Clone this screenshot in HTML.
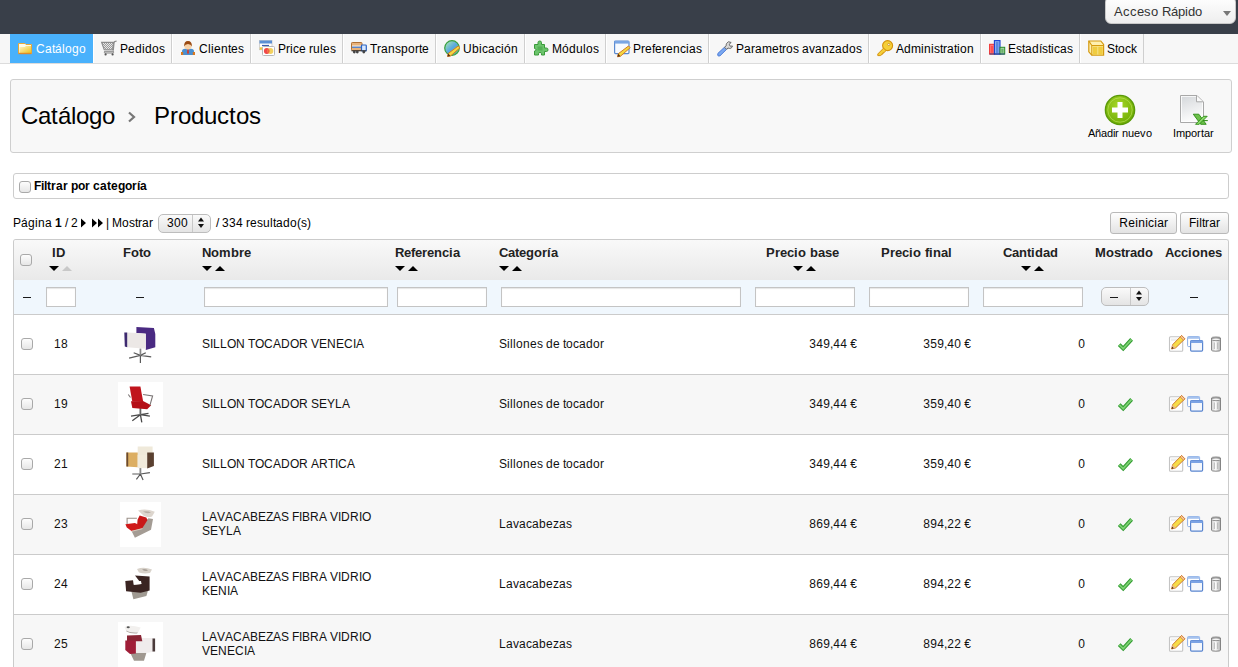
<!DOCTYPE html>
<html><head><meta charset="utf-8"><style>
*{box-sizing:border-box}
html,body{margin:0;padding:0;width:1238px;height:667px;overflow:hidden;background:#fff;font-family:"Liberation Sans",sans-serif;color:#000}
.a{position:absolute}
i{font-style:normal;display:inline-block}
.dash{position:absolute;width:8px;height:1px;background:#1a1a1a}
svg{position:absolute;overflow:visible}
#hdr{left:0;top:0;width:1238px;height:34px;background:#393f49}
#qa{left:1105px;top:-4px;width:131px;height:28px;border-radius:6px;background:linear-gradient(#fff,#eee);border:1px solid #c8c8c8;font-size:13px;color:#333}
#qa span{position:absolute;left:8px;top:6.5px}
#qa i.arr{position:absolute;left:117px;top:14px;width:0;height:0;border-left:4px solid transparent;border-right:4px solid transparent;border-top:5px solid #777}
#nav{left:0;top:34px;width:1238px;height:30px;background:#f7f7f7;border-bottom:1px solid #dcdcdc}
.tab{position:absolute;top:34px;height:29px;border-right:1px solid #cfcfcf;box-shadow:inset 1px 0 #fff;font-size:12px;color:#000}
.tab svg{top:6px}
.tab span{position:absolute;top:8px;white-space:nowrap}
.tab.act{background:#49b1fc;color:#fff;border-right:none;box-shadow:none}
#panel{left:10px;top:79px;width:1222px;height:74px;background:#f8f8f8;border:1px solid #cfcfcf;border-radius:3px}
.ttl{position:absolute;top:102px;font-size:24px;white-space:nowrap;color:#000}
#catbox{left:13px;top:173px;width:1216px;height:26px;border:1px solid #cdcdcd;border-radius:3px;background:#fff}
.cb{position:absolute;width:12px;height:12px;border:1px solid #a9a9a9;border-radius:3px;background:linear-gradient(#fdfdfd,#e6e6e6)}
.t12{position:absolute;font-size:12px;white-space:nowrap}
.btn{position:absolute;height:22px;border:1px solid #b9b9b9;border-radius:3px;background:linear-gradient(#fefefe,#e3e3e3);font-size:12px;text-align:center;line-height:20px}
#tbl{left:13px;top:239px;width:1216px;height:440px;border:1px solid #cbcbcb;border-bottom:none;border-radius:3px 3px 0 0}
#th{left:14px;top:240px;width:1214px;height:40px;background:linear-gradient(#f9f9f9,#e9e9e9);border-radius:2px 2px 0 0}
#fr{left:14px;top:280px;width:1214px;height:35px;background:#f0f7fd;border-bottom:1px solid #cbcbcb}
.h{position:absolute;top:245px;font-size:13px;font-weight:bold;color:#222;white-space:nowrap}
.inp{position:absolute;top:287px;height:20px;border:1px solid #c4c4c4;background:#fff;box-shadow:inset 0 1px 1px #e6e6e6}
.row{position:absolute;left:14px;width:1214px;height:60px;border-bottom:1px solid #cbcbcb}
.row.g{background:#f7f7f7}
.c{position:absolute;font-size:12px;white-space:nowrap;color:#111}
.dn{position:absolute;width:0;height:0;border-left:5px solid transparent;border-right:5px solid transparent;border-top:5px solid #000}
.up{position:absolute;width:0;height:0;border-left:5px solid transparent;border-right:5px solid transparent;border-bottom:5px solid #000}
.w1{width:1px}.w2{width:2px}.w3{width:3px}.w4{width:4px}.w5{width:5px}.w6{width:6px}.w7{width:7px}.w8{width:8px}.w9{width:9px}.w10{width:10px}.w11{width:11px}.w12{width:12px}.w13{width:13px}.w14{width:14px}.w15{width:15px}.w16{width:16px}.w17{width:17px}.w18{width:18px}.w19{width:19px}.w20{width:20px}.w21{width:21px}.w22{width:22px}.w23{width:23px}.w24{width:24px}.w25{width:25px}.w26{width:26px}.w27{width:27px}.w28{width:28px}.w29{width:29px}</style></head><body>
<div id="hdr" class="a"></div>
<div id="qa" class="a"><span><i class="w9">A</i><i class="w7">c</i><i class="w7">c</i><i class="w7">e</i><i class="w7">s</i><i class="w7">o</i><i class="w4"> </i><i class="w9">R</i><i class="w7">á</i><i class="w7">p</i><i class="w3">i</i><i class="w7">d</i><i class="w7">o</i></span><i class="arr"></i></div>
<div id="nav" class="a"></div>
<div class="tab act" style="left:10px;width:83px"><svg width="16" height="16" style="left:7px" viewBox="0 0 16 16"><defs><linearGradient id="gf" x1="0" y1="0" x2="1" y2="1"><stop offset="0" stop-color="#fff6c9"/><stop offset="1" stop-color="#eec21a"/></linearGradient></defs>
<path d="M1.5 3.5 H8 L9 4.5 H14.5 V13.5 H1.5Z" fill="#fffbe8" stroke="#e6a83a" stroke-width="1"/>
<path d="M2.5 7 H7.5 L9 6 H14 V13 H2.5Z" fill="url(#gf)"/>
<path d="M1.5 13.5 H14.5" stroke="#e08a2a" stroke-width="1.4"/></svg><span style="left:26px"><i class="w9">C</i><i class="w7">a</i><i class="w3">t</i><i class="w7">á</i><i class="w3">l</i><i class="w7">o</i><i class="w7">g</i><i class="w7">o</i></span></div>
<div class="tab" style="left:93px;width:79px"><svg width="16" height="16" style="left:8px" viewBox="0 0 16 16"><defs><pattern id="pm" width="2" height="2" patternUnits="userSpaceOnUse"><rect width="2" height="2" fill="#e8e8e8"/><rect width="1" height="1" fill="#9a9a9a"/><rect x="1" y="1" width="1" height="1" fill="#9a9a9a"/></pattern></defs>
<path d="M0.6 2.4 H12.6 L11.6 9.8 H3.2Z" fill="url(#pm)" stroke="#8c8c8c" stroke-width="1.1"/>
<path d="M12.2 10.6 L13 2.6 Q13.3 1.2 15.6 1.2" fill="none" stroke="#8c8c8c" stroke-width="1.3"/>
<path d="M3.5 11.3 H12.5 Q13 13 12 13 H4 Q2.8 13 3.5 11.3Z" fill="#e4e4e4" stroke="#888" stroke-width="1"/>
<circle cx="4.6" cy="14.4" r="1.1" fill="#555"/><circle cx="11.6" cy="14.4" r="1.1" fill="#555"/></svg><span style="left:27px"><i class="w8">P</i><i class="w7">e</i><i class="w7">d</i><i class="w3">i</i><i class="w7">d</i><i class="w7">o</i><i class="w6">s</i></span></div>
<div class="tab" style="left:172px;width:79px"><svg width="16" height="16" style="left:8px" viewBox="0 0 16 16"><path d="M2 15 V11.5 Q2 9 5 8.8 H11 Q14 9 14 11.5 V15Z" fill="#4a8fd0"/>
<rect x="1" y="12" width="2.2" height="3" fill="#d8781f"/><rect x="12.8" y="12" width="2.2" height="3" fill="#d8781f"/>
<path d="M7.4 9 H8.6 L9 13 L8 14 L7 13Z" fill="#d63a2a"/>
<ellipse cx="8" cy="6" rx="3.6" ry="3.4" fill="#f6d2a8"/>
<path d="M4.2 6.5 Q3.8 1 8 1 Q12.2 1 11.8 6.5 Q11 4 8 4 Q5 4 4.2 6.5Z" fill="#9a4a12"/></svg><span style="left:27px"><i class="w9">C</i><i class="w3">l</i><i class="w3">i</i><i class="w7">e</i><i class="w7">n</i><i class="w3">t</i><i class="w7">e</i><i class="w6">s</i></span></div>
<div class="tab" style="left:251px;width:92px"><svg width="16" height="16" style="left:8px" viewBox="0 0 16 16"><rect x="0.5" y="0.5" width="12.5" height="9.2" fill="#fff" stroke="#c8c8c8" stroke-width="0.8"/>
<rect x="0.5" y="0.5" width="12.5" height="3" fill="#5b8fd4"/>
<path d="M3 5.5 H10" stroke="#3a5fb0" stroke-width="1.2"/>
<rect x="0.8" y="7.3" width="3" height="2.4" fill="#f0c840"/>
<rect x="3.5" y="6.5" width="12" height="9" rx="1" fill="#fff" stroke="#b8b8b8" stroke-width="1"/>
<circle cx="7.8" cy="11" r="2.9" fill="#f04848"/><circle cx="11.4" cy="11" r="2.9" fill="#f2cf55" fill-opacity="0.95"/>
<path d="M9.6 8.8 A2.9 2.9 0 0 1 9.6 13.2 A2.9 2.9 0 0 1 9.6 8.8Z" fill="#f06040"/></svg><span style="left:27px"><i class="w8">P</i><i class="w4">r</i><i class="w3">i</i><i class="w6">c</i><i class="w7">e</i><i class="w3"> </i><i class="w4">r</i><i class="w7">u</i><i class="w3">l</i><i class="w7">e</i><i class="w6">s</i></span></div>
<div class="tab" style="left:343px;width:93px"><svg width="16" height="16" style="left:8px" viewBox="0 0 16 16"><rect x="0.5" y="2.5" width="10.5" height="8" rx="0.8" fill="#e8b27a" stroke="#b07034" stroke-width="1"/>
<rect x="1" y="5.6" width="10" height="1.1" fill="#fff"/><rect x="1" y="6.6" width="10" height="1.2" fill="#3a7ad8"/>
<rect x="10.5" y="5" width="4.8" height="6" rx="0.8" fill="#d8e8ff" stroke="#2a62c0" stroke-width="1.2"/>
<path d="M0.5 10.8 H15.3" stroke="#333" stroke-width="1"/>
<circle cx="3.3" cy="12" r="1.4" fill="#444"/><circle cx="6.3" cy="12" r="1.4" fill="#444"/><circle cx="12.8" cy="12" r="1.4" fill="#444"/></svg><span style="left:27px"><i class="w7">T</i><i class="w4">r</i><i class="w7">a</i><i class="w7">n</i><i class="w6">s</i><i class="w7">p</i><i class="w7">o</i><i class="w4">r</i><i class="w3">t</i><i class="w7">e</i></span></div>
<div class="tab" style="left:436px;width:89px"><svg width="16" height="16" style="left:8px" viewBox="0 0 16 16"><defs><linearGradient id="gg" x1="0" y1="0" x2="1" y2="1"><stop offset="0" stop-color="#b8f0a8"/><stop offset="0.5" stop-color="#5aa8e0"/><stop offset="1" stop-color="#60c060"/></linearGradient></defs>
<circle cx="8" cy="8" r="7.3" fill="url(#gg)" stroke="#3aa040" stroke-width="1.2"/>
<path d="M14.2 6 L16 7.8 L6.5 16 L3.5 16.5 L4.2 13.5Z" fill="#f5d840" stroke="#d07a2a" stroke-width="1"/>
<path d="M4.2 13.5 L6.5 16 L3.5 16.5Z" fill="#5a3010"/></svg><span style="left:27px"><i class="w9">U</i><i class="w7">b</i><i class="w3">i</i><i class="w6">c</i><i class="w7">a</i><i class="w6">c</i><i class="w3">i</i><i class="w7">ó</i><i class="w7">n</i></span></div>
<div class="tab" style="left:525px;width:81px"><svg width="16" height="16" style="left:8px" viewBox="0 0 16 16"><path d="M1.5 4.5 H5 V2.5 Q5 1 6.8 1 Q8.5 1 8.5 2.5 V4.5 H11.5 V8 H13.5 Q15 8 15 9.8 Q15 11.5 13.5 11.5 H11.5 V15 H8.5 V13.5 Q8.5 12.5 7 12.5 Q5.5 12.5 5.5 13.5 V15 H1.5 V11 Q3 11 3 9.8 Q3 8.5 1.5 8.5Z" fill="#6cc46c" stroke="#3a9a3a" stroke-width="1"/>
<rect x="4.5" y="6.5" width="5" height="4" fill="#4caa4c" opacity="0.7"/></svg><span style="left:27px"><i class="w10">M</i><i class="w7">ó</i><i class="w7">d</i><i class="w7">u</i><i class="w3">l</i><i class="w7">o</i><i class="w6">s</i></span></div>
<div class="tab" style="left:606px;width:103px"><svg width="16" height="16" style="left:8px" viewBox="0 0 16 16"><rect x="0.6" y="1" width="14.4" height="12.6" rx="1" fill="#f8fbff" stroke="#5a8ad0" stroke-width="1.2"/>
<rect x="0.6" y="1" width="14.4" height="2.6" fill="#7aa6e4"/>
<path d="M14.5 6 L16.2 7.7 L6.5 16.2 L3.5 16.8 L4.2 13.8Z" fill="#f5d840" stroke="#d07a2a" stroke-width="1"/>
<path d="M4.2 13.8 L6.5 16.2 L3.5 16.8Z" fill="#5a3010"/></svg><span style="left:27px"><i class="w8">P</i><i class="w4">r</i><i class="w7">e</i><i class="w3">f</i><i class="w7">e</i><i class="w4">r</i><i class="w7">e</i><i class="w7">n</i><i class="w6">c</i><i class="w3">i</i><i class="w7">a</i><i class="w6">s</i></span></div>
<div class="tab" style="left:709px;width:160px"><svg width="16" height="16" style="left:8px" viewBox="0 0 16 16"><path d="M0.8 13.5 L7.5 7.2 L9.6 9.3 L3 15.8 Q1.6 16.4 0.8 15.5Z" fill="#7aa8f0" stroke="#4a7ad8" stroke-width="1"/>
<path d="M7.5 7.2 L9.6 9.3 L11 8 Q14.5 9.5 15.5 6 L13.2 6.2 L12.2 4.2 L14.2 2.5 Q11 0.5 9.5 3.5 Q9 5 9.2 5.8Z" fill="#d8d8d8" stroke="#6a6a6a" stroke-width="1"/></svg><span style="left:27px"><i class="w8">P</i><i class="w7">a</i><i class="w4">r</i><i class="w7">a</i><i class="w10">m</i><i class="w7">e</i><i class="w3">t</i><i class="w4">r</i><i class="w7">o</i><i class="w6">s</i><i class="w3"> </i><i class="w7">a</i><i class="w6">v</i><i class="w7">a</i><i class="w7">n</i><i class="w6">z</i><i class="w7">a</i><i class="w7">d</i><i class="w7">o</i><i class="w6">s</i></span></div>
<div class="tab" style="left:869px;width:112px"><svg width="16" height="16" style="left:8px" viewBox="0 0 16 16"><circle cx="10.6" cy="5.6" r="5" fill="#f5cf38" stroke="#d4920e" stroke-width="1.1"/>
<circle cx="11.8" cy="4.5" r="1.1" fill="#fff" stroke="#c88a10" stroke-width="0.7"/>
<path d="M6.5 8.2 L0.8 14 V15.6 H3.5 L4.2 14.8 L5 14.8 L5 13.8 L6 13.8 L6 12.8 L7 12.8 L9 10.5Z" fill="#f5cf38" stroke="#d4920e" stroke-width="1"/></svg><span style="left:27px"><i class="w8">A</i><i class="w7">d</i><i class="w10">m</i><i class="w3">i</i><i class="w7">n</i><i class="w3">i</i><i class="w6">s</i><i class="w3">t</i><i class="w4">r</i><i class="w7">a</i><i class="w3">t</i><i class="w3">i</i><i class="w7">o</i><i class="w7">n</i></span></div>
<div class="tab" style="left:981px;width:99px"><svg width="16" height="16" style="left:8px" viewBox="0 0 16 16"><rect x="0.6" y="4.3" width="4.8" height="9.8" fill="#ff8080" stroke="#f03030" stroke-width="1"/>
<rect x="1.8" y="5.8" width="2.4" height="7" fill="#ff5050"/>
<rect x="5.4" y="0.6" width="5.6" height="13.5" fill="#8ab0f0" stroke="#1a40d0" stroke-width="1.1"/>
<rect x="7" y="2" width="2.4" height="11" fill="#5a88e0"/>
<rect x="11" y="7.3" width="4.7" height="6.8" fill="#a8d8a8" stroke="#2a8a2a" stroke-width="1"/>
<rect x="12.3" y="8.8" width="2.2" height="4" fill="#6ab06a"/>
<path d="M0.6 14 H15.7" stroke="#223a80" stroke-width="0.9"/></svg><span style="left:27px"><i class="w8">E</i><i class="w6">s</i><i class="w3">t</i><i class="w7">a</i><i class="w7">d</i><i class="w3">í</i><i class="w6">s</i><i class="w3">t</i><i class="w3">i</i><i class="w6">c</i><i class="w7">a</i><i class="w6">s</i></span></div>
<div class="tab" style="left:1080px;width:64px"><svg width="16" height="16" style="left:8px" viewBox="0 0 16 16"><path d="M0.8 1 H12.8 L15.6 4.5 V15.2 H3.8 L0.8 11.8Z" fill="#fff0b0" stroke="#d49a10" stroke-width="1.2"/>
<path d="M3.8 5.5 H15.6 M3.8 5.5 V15.2 M0.8 1 L3.8 5.5" fill="none" stroke="#d49a10" stroke-width="1.1"/>
<rect x="4.8" y="6.5" width="10" height="8" fill="#f0cc40"/>
<path d="M9.8 6.5 V14.5" stroke="#f8e8a0" stroke-width="0.8"/></svg><span style="left:27px"><i class="w8">S</i><i class="w3">t</i><i class="w7">o</i><i class="w6">c</i><i class="w6">k</i></span></div>
<div id="panel" class="a"></div>
<div class="ttl" style="left:21px"><i class="w17">C</i><i class="w13">a</i><i class="w7">t</i><i class="w13">á</i><i class="w5">l</i><i class="w13">o</i><i class="w13">g</i><i class="w13">o</i></div>
<svg width="10" height="12" style="left:127px;top:111px" viewBox="0 0 10 12"><path d="M2 1.5 L7 6 L2 10.5" fill="none" stroke="#777" stroke-width="2.2"/></svg>
<div class="ttl" style="left:154px"><i class="w16">P</i><i class="w8">r</i><i class="w13">o</i><i class="w13">d</i><i class="w13">u</i><i class="w12">c</i><i class="w7">t</i><i class="w13">o</i><i class="w12">s</i></div>
<svg width="32" height="32" style="left:1104px;top:94px" viewBox="0 0 32 32">
<defs><radialGradient id="ga" cx="0.45" cy="0.35" r="0.7"><stop offset="0" stop-color="#a8d82a"/><stop offset="1" stop-color="#6aa800"/></radialGradient></defs>
<circle cx="16" cy="16" r="14.6" fill="url(#ga)" stroke="#5a9a08" stroke-width="1.4"/>
<circle cx="16" cy="16" r="12.2" fill="none" stroke="#c4ec6a" stroke-width="0.8" opacity="0.7"/>
<path d="M13.5 8 H18.5 V13.5 H24 V18.5 H18.5 V24 H13.5 V18.5 H8 V13.5 H13.5Z" fill="#fff"/>
</svg>
<div class="a" style="left:1088px;top:127px;font-size:11px;white-space:nowrap"><i class="w7">A</i><i class="w6">ñ</i><i class="w6">a</i><i class="w6">d</i><i class="w2">i</i><i class="w4">r</i><i class="w3"> </i><i class="w6">n</i><i class="w6">u</i><i class="w6">e</i><i class="w6">v</i><i class="w6">o</i></div>
<svg width="30" height="32" style="left:1179px;top:94px" viewBox="0 0 30 32">
<defs><linearGradient id="gp" x1="0" y1="0" x2="0.3" y2="1"><stop offset="0" stop-color="#d6d9dc"/><stop offset="1" stop-color="#fbfbfb"/></linearGradient></defs>
<path d="M1.5 1.5 H18 L24.5 8 V28.5 H1.5Z" fill="#fff" stroke="#a8a8a8" stroke-width="1"/>
<path d="M2.8 2.8 H17.2 L23.2 8.6 V27.2 H2.8Z" fill="url(#gp)"/>
<path d="M17.5 2 V7.8 H24" fill="#fbfbfb" stroke="#a8a8a8" stroke-width="1"/>
<path d="M14.3 20.2 H19.8 L27.2 30.3 H21.7Z" fill="#6cc04a" stroke="#2a8a12" stroke-width="0.9"/>
<path d="M16.5 30.3 H20.2 L28.2 22.3 H24.5Z" fill="#8ad86a" stroke="#2a8a12" stroke-width="0.9"/>
<path d="M24.5 26.6 H28.8" stroke="#2a8a12" stroke-width="1"/>
</svg>
<div class="a" style="left:1173px;top:127px;font-size:11px;white-space:nowrap"><i class="w3">I</i><i class="w9">m</i><i class="w6">p</i><i class="w6">o</i><i class="w4">r</i><i class="w3">t</i><i class="w6">a</i><i class="w4">r</i></div>
<div id="catbox" class="a"></div>
<div class="cb" style="left:19px;top:181px"></div>
<div class="t12" style="left:34px;top:179px;font-weight:bold"><i class="w7">F</i><i class="w3">i</i><i class="w3">l</i><i class="w4">t</i><i class="w5">r</i><i class="w7">a</i><i class="w5">r</i><i class="w3"> </i><i class="w7">p</i><i class="w7">o</i><i class="w5">r</i><i class="w3"> </i><i class="w7">c</i><i class="w7">a</i><i class="w4">t</i><i class="w7">e</i><i class="w7">g</i><i class="w7">o</i><i class="w5">r</i><i class="w3">í</i><i class="w7">a</i></div>
<div class="t12" style="left:13px;top:216px"><i class="w8">P</i><i class="w7">á</i><i class="w7">g</i><i class="w3">i</i><i class="w7">n</i><i class="w7">a</i><i class="w3"> </i><b><i class="w7">1</i></b><i class="w3"> </i><i class="w3">/</i><i class="w3"> </i><i class="w7">2</i></div>
<svg width="30" height="10" style="left:80px;top:218px" viewBox="0 0 30 10"><path d="M1 0.5 L6 5 L1 9.5Z M12 0.5 L17 5 L12 9.5Z M18 0.5 L23 5 L18 9.5Z" fill="#000"/></svg>
<div class="t12" style="left:106px;top:216px"><i class="w3">|</i><i class="w3"> </i><i class="w10">M</i><i class="w7">o</i><i class="w6">s</i><i class="w3">t</i><i class="w4">r</i><i class="w7">a</i><i class="w4">r</i></div>
<div class="a" style="left:158px;top:214px;width:53px;height:19px;border:1px solid #bdbdbd;border-radius:5px;background:linear-gradient(#fafafa,#e4e4e4)"><div class="a" style="left:33px;top:0;width:1px;height:17px;background:#c8c8c8"></div></div>
<div class="t12" style="left:167px;top:216px"><i class="w7">3</i><i class="w7">0</i><i class="w7">0</i></div>
<svg width="8" height="12" style="left:197px;top:217px" viewBox="0 0 8 12"><path d="M4 0.5 L7 4.5 L1 4.5Z M1 7 L7 7 L4 11Z" fill="#111"/></svg>
<div class="t12" style="left:216px;top:216px"><i class="w3">/</i><i class="w3"> </i><i class="w7">3</i><i class="w7">3</i><i class="w7">4</i><i class="w3"> </i><i class="w4">r</i><i class="w7">e</i><i class="w6">s</i><i class="w7">u</i><i class="w3">l</i><i class="w3">t</i><i class="w7">a</i><i class="w7">d</i><i class="w7">o</i><i class="w4">(</i><i class="w6">s</i><i class="w4">)</i></div>
<div class="btn" style="left:1110px;top:212px;width:67px"><i class="w9">R</i><i class="w7">e</i><i class="w3">i</i><i class="w7">n</i><i class="w3">i</i><i class="w6">c</i><i class="w3">i</i><i class="w7">a</i><i class="w4">r</i></div>
<div class="btn" style="left:1180px;top:212px;width:49px"><i class="w7">F</i><i class="w3">i</i><i class="w3">l</i><i class="w3">t</i><i class="w4">r</i><i class="w7">a</i><i class="w4">r</i></div>
<div id="tbl" class="a"></div>
<div id="th" class="a"></div>
<div id="fr" class="a"></div>
<div class="cb" style="left:20px;top:254px"></div>
<div class="h" style="left:52px"><i class="w4">I</i><i class="w9">D</i></div>
<div class="h" style="left:123px"><i class="w8">F</i><i class="w8">o</i><i class="w4">t</i><i class="w8">o</i></div>
<div class="h" style="left:202px"><i class="w9">N</i><i class="w8">o</i><i class="w12">m</i><i class="w8">b</i><i class="w5">r</i><i class="w7">e</i></div>
<div class="h" style="left:395px"><i class="w9">R</i><i class="w7">e</i><i class="w4">f</i><i class="w7">e</i><i class="w5">r</i><i class="w7">e</i><i class="w8">n</i><i class="w7">c</i><i class="w4">i</i><i class="w7">a</i></div>
<div class="h" style="left:499px"><i class="w9">C</i><i class="w7">a</i><i class="w4">t</i><i class="w7">e</i><i class="w8">g</i><i class="w8">o</i><i class="w5">r</i><i class="w4">í</i><i class="w7">a</i></div>
<div class="h" style="left:766px"><i class="w9">P</i><i class="w5">r</i><i class="w7">e</i><i class="w7">c</i><i class="w4">i</i><i class="w8">o</i><i class="w4"> </i><i class="w8">b</i><i class="w7">a</i><i class="w7">s</i><i class="w7">e</i></div>
<div class="h" style="left:881px"><i class="w9">P</i><i class="w5">r</i><i class="w7">e</i><i class="w7">c</i><i class="w4">i</i><i class="w8">o</i><i class="w4"> </i><i class="w4">f</i><i class="w4">i</i><i class="w8">n</i><i class="w7">a</i><i class="w4">l</i></div>
<div class="h" style="left:1003px"><i class="w9">C</i><i class="w7">a</i><i class="w8">n</i><i class="w4">t</i><i class="w4">i</i><i class="w8">d</i><i class="w7">a</i><i class="w8">d</i></div>
<div class="h" style="left:1095px"><i class="w11">M</i><i class="w8">o</i><i class="w7">s</i><i class="w4">t</i><i class="w5">r</i><i class="w7">a</i><i class="w8">d</i><i class="w8">o</i></div>
<div class="h" style="left:1165px"><i class="w9">A</i><i class="w7">c</i><i class="w7">c</i><i class="w4">i</i><i class="w8">o</i><i class="w8">n</i><i class="w7">e</i><i class="w7">s</i></div>
<div class="dn" style="left:202px;top:266px"></div><div class="up" style="left:215px;top:266px"></div>
<div class="dn" style="left:395px;top:266px"></div><div class="up" style="left:408px;top:266px"></div>
<div class="dn" style="left:499px;top:266px"></div><div class="up" style="left:512px;top:266px"></div>
<div class="dn" style="left:793px;top:266px"></div><div class="up" style="left:806px;top:266px"></div>
<div class="dn" style="left:1021px;top:266px"></div><div class="up" style="left:1034px;top:266px"></div>
<div class="up" style="left:62px;top:266px;border-bottom-color:#c8c8c8"></div><div class="dn" style="left:49px;top:266px"></div>
<div class="inp" style="left:46px;width:30px"></div>
<div class="inp" style="left:204px;width:184px"></div>
<div class="inp" style="left:397px;width:90px"></div>
<div class="inp" style="left:501px;width:240px"></div>
<div class="inp" style="left:755px;width:100px"></div>
<div class="inp" style="left:869px;width:100px"></div>
<div class="inp" style="left:983px;width:100px"></div>
<div class="dash" style="left:23px;top:297px"></div>
<div class="dash" style="left:136px;top:297px"></div>
<div class="dash" style="left:1190px;top:297px"></div>
<div class="a" style="left:1101px;top:287px;width:48px;height:19px;border:1px solid #bdbdbd;border-radius:5px;background:linear-gradient(#fafafa,#e4e4e4)"><div class="a" style="left:28px;top:0;width:1px;height:17px;background:#c8c8c8"></div></div>
<div class="dash" style="left:1110px;top:297px"></div>
<svg width="8" height="12" style="left:1135px;top:290px" viewBox="0 0 8 12"><path d="M4 0.5 L7 4.5 L1 4.5Z M1 7 L7 7 L4 11Z" fill="#111"/></svg>
<div class="row" style="top:315px;height:60px"></div>
<div class="cb" style="left:21px;top:338px"></div>
<div class="c" style="left:54px;top:337px"><i class="w7">1</i><i class="w7">8</i></div>
<svg width="45" height="45" style="left:118px;top:322px" viewBox="0 0 45 45"><rect width="45" height="45" fill="#fff"/>
<path d="M22.4 33.4 L11.1 36.1 M22.4 33.4 L33.2 34.8 M22.4 33.4 L22.4 41 M22.4 33.4 L15.7 30.7 M22.4 33.4 L27.8 30.7" stroke="#5a5a5a" stroke-width="1.2"/>
<rect x="21.6" y="26.5" width="1.7" height="7" fill="#888"/>
<path d="M18.4 5.1 L35.9 5.9 L37.3 11.9 L37.3 25.3 L27.8 28 L27.8 12 L18.4 11Z" fill="#4a2a82"/>
<path d="M9 10.5 L27.8 11.5 L27.8 26.7 L9 25.3Z" fill="#ece8e6"/>
<path d="M6.3 10.5 L9.2 10.5 L9.2 25.3 L6.8 24.5Z" fill="#3e2a70"/></svg>
<div class="c" style="left:202px;top:337px"><i class="w8">S</i><i class="w3">I</i><i class="w7">L</i><i class="w7">L</i><i class="w9">O</i><i class="w9">N</i><i class="w3"> </i><i class="w7">T</i><i class="w9">O</i><i class="w9">C</i><i class="w8">A</i><i class="w9">D</i><i class="w9">O</i><i class="w9">R</i><i class="w3"> </i><i class="w8">V</i><i class="w8">E</i><i class="w9">N</i><i class="w8">E</i><i class="w9">C</i><i class="w3">I</i><i class="w8">A</i></div>
<div class="c" style="left:499px;top:337px"><i class="w8">S</i><i class="w3">i</i><i class="w3">l</i><i class="w3">l</i><i class="w7">o</i><i class="w7">n</i><i class="w7">e</i><i class="w6">s</i><i class="w3"> </i><i class="w7">d</i><i class="w7">e</i><i class="w3"> </i><i class="w3">t</i><i class="w7">o</i><i class="w6">c</i><i class="w7">a</i><i class="w7">d</i><i class="w7">o</i><i class="w4">r</i></div>
<div class="c" style="left:757px;width:100px;text-align:right;top:337px"><i class="w7">3</i><i class="w7">4</i><i class="w7">9</i><i class="w3">,</i><i class="w7">4</i><i class="w7">4</i><i class="w3"> </i><i class="w7">€</i></div>
<div class="c" style="left:871px;width:100px;text-align:right;top:337px"><i class="w7">3</i><i class="w7">5</i><i class="w7">9</i><i class="w3">,</i><i class="w7">4</i><i class="w7">0</i><i class="w3"> </i><i class="w7">€</i></div>
<div class="c" style="left:985px;width:100px;text-align:right;top:337px"><i class="w7">0</i></div>
<svg width="16" height="16" style="left:1117px;top:336px" viewBox="0 0 16 16"><path d="M2.2 8.6 L6.2 12.6 L14.6 3.4" fill="none" stroke="#2f9a2f" stroke-width="3.8" stroke-linejoin="miter"/>
<path d="M2.2 8.6 L6.2 12.6 L14.6 3.4" fill="none" stroke="#7ccf72" stroke-width="1.8"/></svg>
<svg width="16" height="16" style="left:1168px;top:336px" viewBox="0 0 16 16"><rect x="1.5" y="0.8" width="13.2" height="14.4" rx="1" fill="#fff" stroke="#c4c4c4" stroke-width="1.1"/>
<rect x="3" y="2.5" width="7" height="2.5" fill="#eee"/>
<g transform="translate(0.3,-1.8)"><path d="M13.3 1.3 L16.6 4.6 L7.4 13.6 L3.3 14.8 L4.3 10.5Z" fill="#f6dc48" stroke="#d07a2a" stroke-width="1"/>
<path d="M13.3 1.3 L16.6 4.6 L15.2 6 L11.9 2.7Z" fill="#f6c8a8" stroke="#d07a2a" stroke-width="0.8"/>
<path d="M4.3 10.5 L7.4 13.6 L3.3 14.8Z" fill="#e8b888"/>
<path d="M3.9 12.6 L5.4 14.1 L3.3 14.8Z" fill="#4a2808"/></g></svg>
<svg width="16" height="16" style="left:1187px;top:336px" viewBox="0 0 16 16"><rect x="0.6" y="0.6" width="12" height="10" rx="1" fill="#fff" stroke="#8aaee6" stroke-width="1"/>
<rect x="0.6" y="0.6" width="12" height="2.2" fill="#a6c2ee"/>
<rect x="3.6" y="4.6" width="12" height="10.5" rx="1" fill="#f4f7fc" stroke="#5a86d0" stroke-width="1.2"/>
<rect x="3.6" y="4.6" width="12" height="2.4" fill="#7aa2e4"/></svg>
<svg width="16" height="16" style="left:1208px;top:336px" viewBox="0 0 16 16"><defs><linearGradient id="gt" x1="0" y1="0" x2="1" y2="0"><stop offset="0" stop-color="#cfcfcf"/><stop offset="0.45" stop-color="#fafafa"/><stop offset="1" stop-color="#b4b4b4"/></linearGradient></defs>
<path d="M3.5 2 Q3.5 1 8 1 Q12.5 1 12.5 2 V14.2 Q12.5 15.2 8 15.2 Q3.5 15.2 3.5 14.2Z" fill="url(#gt)" stroke="#7a7a7a" stroke-width="0.9"/>
<ellipse cx="8" cy="3.3" rx="4.3" ry="1.4" fill="#f4f4f4" stroke="#777" stroke-width="0.8"/>
<path d="M6.3 6.5 V13 M9.7 6.5 V13" stroke="#b0b0b0" stroke-width="0.9"/></svg>
<div class="row g" style="top:375px;height:60px"></div>
<div class="cb" style="left:21px;top:398px"></div>
<div class="c" style="left:54px;top:397px"><i class="w7">1</i><i class="w7">9</i></div>
<svg width="45" height="45" style="left:118px;top:382px" viewBox="0 0 45 45"><rect width="45" height="45" fill="#fff"/>
<path d="M22.4 32.7 L13 34.1 M22.4 32.7 L31.9 34.1 M22.4 32.7 L23.8 40.3 M22.4 32.7 L14.3 38.7 M22.4 32.7 L30.5 31.4" stroke="#4a4a4a" stroke-width="1.3"/>
<rect x="21.5" y="26" width="1.8" height="7" fill="#666"/>
<path d="M11.6 4.4 L22.4 4.4 L25.1 19.3 L14.3 19.5Z" fill="#c0141c"/>
<path d="M13 19.3 L25 19 L33.2 23.3 L29.2 27.3 L14.3 26Z" fill="#b51018"/>
<path d="M25.1 12.5 L34.6 13.9 L31.9 23.3 M10.3 12.5 L12.5 15.5" fill="none" stroke="#7a7474" stroke-width="1.1"/></svg>
<div class="c" style="left:202px;top:397px"><i class="w8">S</i><i class="w3">I</i><i class="w7">L</i><i class="w7">L</i><i class="w9">O</i><i class="w9">N</i><i class="w3"> </i><i class="w7">T</i><i class="w9">O</i><i class="w9">C</i><i class="w8">A</i><i class="w9">D</i><i class="w9">O</i><i class="w9">R</i><i class="w3"> </i><i class="w8">S</i><i class="w8">E</i><i class="w8">Y</i><i class="w7">L</i><i class="w8">A</i></div>
<div class="c" style="left:499px;top:397px"><i class="w8">S</i><i class="w3">i</i><i class="w3">l</i><i class="w3">l</i><i class="w7">o</i><i class="w7">n</i><i class="w7">e</i><i class="w6">s</i><i class="w3"> </i><i class="w7">d</i><i class="w7">e</i><i class="w3"> </i><i class="w3">t</i><i class="w7">o</i><i class="w6">c</i><i class="w7">a</i><i class="w7">d</i><i class="w7">o</i><i class="w4">r</i></div>
<div class="c" style="left:757px;width:100px;text-align:right;top:397px"><i class="w7">3</i><i class="w7">4</i><i class="w7">9</i><i class="w3">,</i><i class="w7">4</i><i class="w7">4</i><i class="w3"> </i><i class="w7">€</i></div>
<div class="c" style="left:871px;width:100px;text-align:right;top:397px"><i class="w7">3</i><i class="w7">5</i><i class="w7">9</i><i class="w3">,</i><i class="w7">4</i><i class="w7">0</i><i class="w3"> </i><i class="w7">€</i></div>
<div class="c" style="left:985px;width:100px;text-align:right;top:397px"><i class="w7">0</i></div>
<svg width="16" height="16" style="left:1117px;top:396px" viewBox="0 0 16 16"><path d="M2.2 8.6 L6.2 12.6 L14.6 3.4" fill="none" stroke="#2f9a2f" stroke-width="3.8" stroke-linejoin="miter"/>
<path d="M2.2 8.6 L6.2 12.6 L14.6 3.4" fill="none" stroke="#7ccf72" stroke-width="1.8"/></svg>
<svg width="16" height="16" style="left:1168px;top:396px" viewBox="0 0 16 16"><rect x="1.5" y="0.8" width="13.2" height="14.4" rx="1" fill="#fff" stroke="#c4c4c4" stroke-width="1.1"/>
<rect x="3" y="2.5" width="7" height="2.5" fill="#eee"/>
<g transform="translate(0.3,-1.8)"><path d="M13.3 1.3 L16.6 4.6 L7.4 13.6 L3.3 14.8 L4.3 10.5Z" fill="#f6dc48" stroke="#d07a2a" stroke-width="1"/>
<path d="M13.3 1.3 L16.6 4.6 L15.2 6 L11.9 2.7Z" fill="#f6c8a8" stroke="#d07a2a" stroke-width="0.8"/>
<path d="M4.3 10.5 L7.4 13.6 L3.3 14.8Z" fill="#e8b888"/>
<path d="M3.9 12.6 L5.4 14.1 L3.3 14.8Z" fill="#4a2808"/></g></svg>
<svg width="16" height="16" style="left:1187px;top:396px" viewBox="0 0 16 16"><rect x="0.6" y="0.6" width="12" height="10" rx="1" fill="#fff" stroke="#8aaee6" stroke-width="1"/>
<rect x="0.6" y="0.6" width="12" height="2.2" fill="#a6c2ee"/>
<rect x="3.6" y="4.6" width="12" height="10.5" rx="1" fill="#f4f7fc" stroke="#5a86d0" stroke-width="1.2"/>
<rect x="3.6" y="4.6" width="12" height="2.4" fill="#7aa2e4"/></svg>
<svg width="16" height="16" style="left:1208px;top:396px" viewBox="0 0 16 16"><defs><linearGradient id="gt" x1="0" y1="0" x2="1" y2="0"><stop offset="0" stop-color="#cfcfcf"/><stop offset="0.45" stop-color="#fafafa"/><stop offset="1" stop-color="#b4b4b4"/></linearGradient></defs>
<path d="M3.5 2 Q3.5 1 8 1 Q12.5 1 12.5 2 V14.2 Q12.5 15.2 8 15.2 Q3.5 15.2 3.5 14.2Z" fill="url(#gt)" stroke="#7a7a7a" stroke-width="0.9"/>
<ellipse cx="8" cy="3.3" rx="4.3" ry="1.4" fill="#f4f4f4" stroke="#777" stroke-width="0.8"/>
<path d="M6.3 6.5 V13 M9.7 6.5 V13" stroke="#b0b0b0" stroke-width="0.9"/></svg>
<div class="row" style="top:435px;height:60px"></div>
<div class="cb" style="left:21px;top:458px"></div>
<div class="c" style="left:54px;top:457px"><i class="w7">2</i><i class="w7">1</i></div>
<svg width="45" height="45" style="left:118px;top:442px" viewBox="0 0 45 45"><rect width="45" height="45" fill="#fff"/>
<path d="M22.4 32 L14.3 32 M22.4 32 L31.9 30.7 M22.4 32 L25.1 38 M22.4 32 L18.4 37.4" stroke="#5a5a5a" stroke-width="1.2"/>
<rect x="21.5" y="26" width="1.8" height="6" fill="#888"/>
<rect x="19.7" y="4.5" width="14.9" height="8.7" fill="#efe9da"/>
<path d="M8.4 10.5 L19.7 10.5 L19.7 25.3 L8.4 24.5Z" fill="#dcae62"/>
<path d="M8.4 10.5 L10.2 10.5 L10.2 24.6 L8.4 24.5Z" fill="#6a4a30"/>
<rect x="19.7" y="13" width="9.5" height="13.1" fill="#f1ebdc"/>
<path d="M29.2 10.5 L35.9 10.5 L35.9 24 L29.2 26.6Z" fill="#5a4030"/></svg>
<div class="c" style="left:202px;top:457px"><i class="w8">S</i><i class="w3">I</i><i class="w7">L</i><i class="w7">L</i><i class="w9">O</i><i class="w9">N</i><i class="w3"> </i><i class="w7">T</i><i class="w9">O</i><i class="w9">C</i><i class="w8">A</i><i class="w9">D</i><i class="w9">O</i><i class="w9">R</i><i class="w3"> </i><i class="w8">A</i><i class="w9">R</i><i class="w7">T</i><i class="w3">I</i><i class="w9">C</i><i class="w8">A</i></div>
<div class="c" style="left:499px;top:457px"><i class="w8">S</i><i class="w3">i</i><i class="w3">l</i><i class="w3">l</i><i class="w7">o</i><i class="w7">n</i><i class="w7">e</i><i class="w6">s</i><i class="w3"> </i><i class="w7">d</i><i class="w7">e</i><i class="w3"> </i><i class="w3">t</i><i class="w7">o</i><i class="w6">c</i><i class="w7">a</i><i class="w7">d</i><i class="w7">o</i><i class="w4">r</i></div>
<div class="c" style="left:757px;width:100px;text-align:right;top:457px"><i class="w7">3</i><i class="w7">4</i><i class="w7">9</i><i class="w3">,</i><i class="w7">4</i><i class="w7">4</i><i class="w3"> </i><i class="w7">€</i></div>
<div class="c" style="left:871px;width:100px;text-align:right;top:457px"><i class="w7">3</i><i class="w7">5</i><i class="w7">9</i><i class="w3">,</i><i class="w7">4</i><i class="w7">0</i><i class="w3"> </i><i class="w7">€</i></div>
<div class="c" style="left:985px;width:100px;text-align:right;top:457px"><i class="w7">0</i></div>
<svg width="16" height="16" style="left:1117px;top:456px" viewBox="0 0 16 16"><path d="M2.2 8.6 L6.2 12.6 L14.6 3.4" fill="none" stroke="#2f9a2f" stroke-width="3.8" stroke-linejoin="miter"/>
<path d="M2.2 8.6 L6.2 12.6 L14.6 3.4" fill="none" stroke="#7ccf72" stroke-width="1.8"/></svg>
<svg width="16" height="16" style="left:1168px;top:456px" viewBox="0 0 16 16"><rect x="1.5" y="0.8" width="13.2" height="14.4" rx="1" fill="#fff" stroke="#c4c4c4" stroke-width="1.1"/>
<rect x="3" y="2.5" width="7" height="2.5" fill="#eee"/>
<g transform="translate(0.3,-1.8)"><path d="M13.3 1.3 L16.6 4.6 L7.4 13.6 L3.3 14.8 L4.3 10.5Z" fill="#f6dc48" stroke="#d07a2a" stroke-width="1"/>
<path d="M13.3 1.3 L16.6 4.6 L15.2 6 L11.9 2.7Z" fill="#f6c8a8" stroke="#d07a2a" stroke-width="0.8"/>
<path d="M4.3 10.5 L7.4 13.6 L3.3 14.8Z" fill="#e8b888"/>
<path d="M3.9 12.6 L5.4 14.1 L3.3 14.8Z" fill="#4a2808"/></g></svg>
<svg width="16" height="16" style="left:1187px;top:456px" viewBox="0 0 16 16"><rect x="0.6" y="0.6" width="12" height="10" rx="1" fill="#fff" stroke="#8aaee6" stroke-width="1"/>
<rect x="0.6" y="0.6" width="12" height="2.2" fill="#a6c2ee"/>
<rect x="3.6" y="4.6" width="12" height="10.5" rx="1" fill="#f4f7fc" stroke="#5a86d0" stroke-width="1.2"/>
<rect x="3.6" y="4.6" width="12" height="2.4" fill="#7aa2e4"/></svg>
<svg width="16" height="16" style="left:1208px;top:456px" viewBox="0 0 16 16"><defs><linearGradient id="gt" x1="0" y1="0" x2="1" y2="0"><stop offset="0" stop-color="#cfcfcf"/><stop offset="0.45" stop-color="#fafafa"/><stop offset="1" stop-color="#b4b4b4"/></linearGradient></defs>
<path d="M3.5 2 Q3.5 1 8 1 Q12.5 1 12.5 2 V14.2 Q12.5 15.2 8 15.2 Q3.5 15.2 3.5 14.2Z" fill="url(#gt)" stroke="#7a7a7a" stroke-width="0.9"/>
<ellipse cx="8" cy="3.3" rx="4.3" ry="1.4" fill="#f4f4f4" stroke="#777" stroke-width="0.8"/>
<path d="M6.3 6.5 V13 M9.7 6.5 V13" stroke="#b0b0b0" stroke-width="0.9"/></svg>
<div class="row g" style="top:495px;height:60px"></div>
<div class="cb" style="left:21px;top:518px"></div>
<div class="c" style="left:54px;top:517px"><i class="w7">2</i><i class="w7">3</i></div>
<svg width="45" height="45" style="left:118px;top:502px" viewBox="0 0 45 45"><rect x="2" width="41" height="45" fill="#fff"/>
<path d="M13.5 29 L25.6 22.3 L30.4 16.2 L35 16.9 L33 27.7 L16.9 35.8Z" fill="#a49c94"/>
<path d="M21.6 13.5 L28.3 15.5 L29.5 18 L24.3 26.3 L19 24.5 L19.6 17.5Z" fill="#c81818"/>
<path d="M7.4 22.3 L16.9 20.9 L19.6 22.3 L24.3 26.3 L13.5 29 L8.8 25.6Z" fill="#d01a1a"/>
<path d="M13.5 29.3 L24.5 26.6" stroke="#e8d8c8" stroke-width="0.8"/>
<path d="M9.1 22 V16.2 H18.9" fill="none" stroke="#9a9088" stroke-width="1.1"/>
<path d="M20 8.5 Q28 6 36.8 9.8 L34 14.5 Q30 16 26 14 Z" fill="#ddd6ce"/>
<path d="M25 9.5 Q30 8.5 33 10.5 Q29 12.5 25 9.5Z" fill="#b8aea4"/></svg>
<div class="c" style="left:202px;top:510px;line-height:14px"><i class="w7">L</i><i class="w8">A</i><i class="w8">V</i><i class="w8">A</i><i class="w9">C</i><i class="w8">A</i><i class="w8">B</i><i class="w8">E</i><i class="w7">Z</i><i class="w8">A</i><i class="w8">S</i><i class="w3"> </i><i class="w7">F</i><i class="w3">I</i><i class="w8">B</i><i class="w9">R</i><i class="w8">A</i><i class="w3"> </i><i class="w8">V</i><i class="w3">I</i><i class="w9">D</i><i class="w9">R</i><i class="w3">I</i><i class="w9">O</i><br><i class="w8">S</i><i class="w8">E</i><i class="w8">Y</i><i class="w7">L</i><i class="w8">A</i></div>
<div class="c" style="left:499px;top:517px"><i class="w7">L</i><i class="w7">a</i><i class="w6">v</i><i class="w7">a</i><i class="w6">c</i><i class="w7">a</i><i class="w7">b</i><i class="w7">e</i><i class="w6">z</i><i class="w7">a</i><i class="w6">s</i></div>
<div class="c" style="left:757px;width:100px;text-align:right;top:517px"><i class="w7">8</i><i class="w7">6</i><i class="w7">9</i><i class="w3">,</i><i class="w7">4</i><i class="w7">4</i><i class="w3"> </i><i class="w7">€</i></div>
<div class="c" style="left:871px;width:100px;text-align:right;top:517px"><i class="w7">8</i><i class="w7">9</i><i class="w7">4</i><i class="w3">,</i><i class="w7">2</i><i class="w7">2</i><i class="w3"> </i><i class="w7">€</i></div>
<div class="c" style="left:985px;width:100px;text-align:right;top:517px"><i class="w7">0</i></div>
<svg width="16" height="16" style="left:1117px;top:516px" viewBox="0 0 16 16"><path d="M2.2 8.6 L6.2 12.6 L14.6 3.4" fill="none" stroke="#2f9a2f" stroke-width="3.8" stroke-linejoin="miter"/>
<path d="M2.2 8.6 L6.2 12.6 L14.6 3.4" fill="none" stroke="#7ccf72" stroke-width="1.8"/></svg>
<svg width="16" height="16" style="left:1168px;top:516px" viewBox="0 0 16 16"><rect x="1.5" y="0.8" width="13.2" height="14.4" rx="1" fill="#fff" stroke="#c4c4c4" stroke-width="1.1"/>
<rect x="3" y="2.5" width="7" height="2.5" fill="#eee"/>
<g transform="translate(0.3,-1.8)"><path d="M13.3 1.3 L16.6 4.6 L7.4 13.6 L3.3 14.8 L4.3 10.5Z" fill="#f6dc48" stroke="#d07a2a" stroke-width="1"/>
<path d="M13.3 1.3 L16.6 4.6 L15.2 6 L11.9 2.7Z" fill="#f6c8a8" stroke="#d07a2a" stroke-width="0.8"/>
<path d="M4.3 10.5 L7.4 13.6 L3.3 14.8Z" fill="#e8b888"/>
<path d="M3.9 12.6 L5.4 14.1 L3.3 14.8Z" fill="#4a2808"/></g></svg>
<svg width="16" height="16" style="left:1187px;top:516px" viewBox="0 0 16 16"><rect x="0.6" y="0.6" width="12" height="10" rx="1" fill="#fff" stroke="#8aaee6" stroke-width="1"/>
<rect x="0.6" y="0.6" width="12" height="2.2" fill="#a6c2ee"/>
<rect x="3.6" y="4.6" width="12" height="10.5" rx="1" fill="#f4f7fc" stroke="#5a86d0" stroke-width="1.2"/>
<rect x="3.6" y="4.6" width="12" height="2.4" fill="#7aa2e4"/></svg>
<svg width="16" height="16" style="left:1208px;top:516px" viewBox="0 0 16 16"><defs><linearGradient id="gt" x1="0" y1="0" x2="1" y2="0"><stop offset="0" stop-color="#cfcfcf"/><stop offset="0.45" stop-color="#fafafa"/><stop offset="1" stop-color="#b4b4b4"/></linearGradient></defs>
<path d="M3.5 2 Q3.5 1 8 1 Q12.5 1 12.5 2 V14.2 Q12.5 15.2 8 15.2 Q3.5 15.2 3.5 14.2Z" fill="url(#gt)" stroke="#7a7a7a" stroke-width="0.9"/>
<ellipse cx="8" cy="3.3" rx="4.3" ry="1.4" fill="#f4f4f4" stroke="#777" stroke-width="0.8"/>
<path d="M6.3 6.5 V13 M9.7 6.5 V13" stroke="#b0b0b0" stroke-width="0.9"/></svg>
<div class="row" style="top:555px;height:60px"></div>
<div class="cb" style="left:21px;top:578px"></div>
<div class="c" style="left:54px;top:577px"><i class="w7">2</i><i class="w7">4</i></div>
<svg width="45" height="45" style="left:118px;top:562px" viewBox="0 0 45 45"><rect width="45" height="45" fill="#fff"/>
<path d="M13.4 29.2 L30 28.4 L28.4 34 L15.4 37.3Z" fill="#a09a92"/>
<path d="M7.3 19 L15 18.3 L15.8 22.7 L23.5 22 L17 13.4 L31.6 14.6 L31.6 28.4 L22.7 30.8 L8.1 29.2Z" fill="#3a2422"/>
<path d="M15.8 19.5 L23 19 L23.5 22 L15.8 22.7Z" fill="#fff"/>
<path d="M19 7 Q26 4.5 34 7.5 L32 11 Q26 12 21 10.5Z" fill="#d8d2ca"/>
<path d="M24 7.5 Q28 7 30 8.2 Q27 9.5 24 7.5Z" fill="#9a928a"/></svg>
<div class="c" style="left:202px;top:570px;line-height:14px"><i class="w7">L</i><i class="w8">A</i><i class="w8">V</i><i class="w8">A</i><i class="w9">C</i><i class="w8">A</i><i class="w8">B</i><i class="w8">E</i><i class="w7">Z</i><i class="w8">A</i><i class="w8">S</i><i class="w3"> </i><i class="w7">F</i><i class="w3">I</i><i class="w8">B</i><i class="w9">R</i><i class="w8">A</i><i class="w3"> </i><i class="w8">V</i><i class="w3">I</i><i class="w9">D</i><i class="w9">R</i><i class="w3">I</i><i class="w9">O</i><br><i class="w8">K</i><i class="w8">E</i><i class="w9">N</i><i class="w3">I</i><i class="w8">A</i></div>
<div class="c" style="left:499px;top:577px"><i class="w7">L</i><i class="w7">a</i><i class="w6">v</i><i class="w7">a</i><i class="w6">c</i><i class="w7">a</i><i class="w7">b</i><i class="w7">e</i><i class="w6">z</i><i class="w7">a</i><i class="w6">s</i></div>
<div class="c" style="left:757px;width:100px;text-align:right;top:577px"><i class="w7">8</i><i class="w7">6</i><i class="w7">9</i><i class="w3">,</i><i class="w7">4</i><i class="w7">4</i><i class="w3"> </i><i class="w7">€</i></div>
<div class="c" style="left:871px;width:100px;text-align:right;top:577px"><i class="w7">8</i><i class="w7">9</i><i class="w7">4</i><i class="w3">,</i><i class="w7">2</i><i class="w7">2</i><i class="w3"> </i><i class="w7">€</i></div>
<div class="c" style="left:985px;width:100px;text-align:right;top:577px"><i class="w7">0</i></div>
<svg width="16" height="16" style="left:1117px;top:576px" viewBox="0 0 16 16"><path d="M2.2 8.6 L6.2 12.6 L14.6 3.4" fill="none" stroke="#2f9a2f" stroke-width="3.8" stroke-linejoin="miter"/>
<path d="M2.2 8.6 L6.2 12.6 L14.6 3.4" fill="none" stroke="#7ccf72" stroke-width="1.8"/></svg>
<svg width="16" height="16" style="left:1168px;top:576px" viewBox="0 0 16 16"><rect x="1.5" y="0.8" width="13.2" height="14.4" rx="1" fill="#fff" stroke="#c4c4c4" stroke-width="1.1"/>
<rect x="3" y="2.5" width="7" height="2.5" fill="#eee"/>
<g transform="translate(0.3,-1.8)"><path d="M13.3 1.3 L16.6 4.6 L7.4 13.6 L3.3 14.8 L4.3 10.5Z" fill="#f6dc48" stroke="#d07a2a" stroke-width="1"/>
<path d="M13.3 1.3 L16.6 4.6 L15.2 6 L11.9 2.7Z" fill="#f6c8a8" stroke="#d07a2a" stroke-width="0.8"/>
<path d="M4.3 10.5 L7.4 13.6 L3.3 14.8Z" fill="#e8b888"/>
<path d="M3.9 12.6 L5.4 14.1 L3.3 14.8Z" fill="#4a2808"/></g></svg>
<svg width="16" height="16" style="left:1187px;top:576px" viewBox="0 0 16 16"><rect x="0.6" y="0.6" width="12" height="10" rx="1" fill="#fff" stroke="#8aaee6" stroke-width="1"/>
<rect x="0.6" y="0.6" width="12" height="2.2" fill="#a6c2ee"/>
<rect x="3.6" y="4.6" width="12" height="10.5" rx="1" fill="#f4f7fc" stroke="#5a86d0" stroke-width="1.2"/>
<rect x="3.6" y="4.6" width="12" height="2.4" fill="#7aa2e4"/></svg>
<svg width="16" height="16" style="left:1208px;top:576px" viewBox="0 0 16 16"><defs><linearGradient id="gt" x1="0" y1="0" x2="1" y2="0"><stop offset="0" stop-color="#cfcfcf"/><stop offset="0.45" stop-color="#fafafa"/><stop offset="1" stop-color="#b4b4b4"/></linearGradient></defs>
<path d="M3.5 2 Q3.5 1 8 1 Q12.5 1 12.5 2 V14.2 Q12.5 15.2 8 15.2 Q3.5 15.2 3.5 14.2Z" fill="url(#gt)" stroke="#7a7a7a" stroke-width="0.9"/>
<ellipse cx="8" cy="3.3" rx="4.3" ry="1.4" fill="#f4f4f4" stroke="#777" stroke-width="0.8"/>
<path d="M6.3 6.5 V13 M9.7 6.5 V13" stroke="#b0b0b0" stroke-width="0.9"/></svg>
<div class="row g" style="top:615px;height:60px"></div>
<div class="cb" style="left:21px;top:638px"></div>
<div class="c" style="left:54px;top:637px"><i class="w7">2</i><i class="w7">5</i></div>
<svg width="45" height="45" style="left:118px;top:622px" viewBox="0 0 45 45"><rect width="45" height="45" fill="#fff"/>
<path d="M12.2 30.7 H28.4 L26 38.8 H16Z" fill="#a09890"/>
<path d="M17.9 16 H35 L36.5 17 V29.5 L30 30.7 H17.9Z" fill="#f0ecec"/>
<rect x="34.5" y="16.5" width="2.6" height="13" fill="#4a3a3a"/>
<path d="M9 13.5 L23 12.9 L24.3 19.3 L9 19.3Z" fill="#8a2434"/>
<path d="M7.3 18.5 H17.9 V31.5 L12 32 L7.3 28Z" fill="#a01e38"/>
<path d="M6.5 5 Q12 2.5 22.7 5.5 L20 10.4 Q12 11 8 8.5Z" fill="#f2f0ee"/>
<path d="M8 8.5 Q12 11 20 10.4 L19 11.5 Q12 12 8.5 9.5Z" fill="#b0aaa4"/>
<ellipse cx="10.2" cy="5.2" rx="1.6" ry="1" fill="#555"/></svg>
<div class="c" style="left:202px;top:630px;line-height:14px"><i class="w7">L</i><i class="w8">A</i><i class="w8">V</i><i class="w8">A</i><i class="w9">C</i><i class="w8">A</i><i class="w8">B</i><i class="w8">E</i><i class="w7">Z</i><i class="w8">A</i><i class="w8">S</i><i class="w3"> </i><i class="w7">F</i><i class="w3">I</i><i class="w8">B</i><i class="w9">R</i><i class="w8">A</i><i class="w3"> </i><i class="w8">V</i><i class="w3">I</i><i class="w9">D</i><i class="w9">R</i><i class="w3">I</i><i class="w9">O</i><br><i class="w8">V</i><i class="w8">E</i><i class="w9">N</i><i class="w8">E</i><i class="w9">C</i><i class="w3">I</i><i class="w8">A</i></div>
<div class="c" style="left:499px;top:637px"><i class="w7">L</i><i class="w7">a</i><i class="w6">v</i><i class="w7">a</i><i class="w6">c</i><i class="w7">a</i><i class="w7">b</i><i class="w7">e</i><i class="w6">z</i><i class="w7">a</i><i class="w6">s</i></div>
<div class="c" style="left:757px;width:100px;text-align:right;top:637px"><i class="w7">8</i><i class="w7">6</i><i class="w7">9</i><i class="w3">,</i><i class="w7">4</i><i class="w7">4</i><i class="w3"> </i><i class="w7">€</i></div>
<div class="c" style="left:871px;width:100px;text-align:right;top:637px"><i class="w7">8</i><i class="w7">9</i><i class="w7">4</i><i class="w3">,</i><i class="w7">2</i><i class="w7">2</i><i class="w3"> </i><i class="w7">€</i></div>
<div class="c" style="left:985px;width:100px;text-align:right;top:637px"><i class="w7">0</i></div>
<svg width="16" height="16" style="left:1117px;top:636px" viewBox="0 0 16 16"><path d="M2.2 8.6 L6.2 12.6 L14.6 3.4" fill="none" stroke="#2f9a2f" stroke-width="3.8" stroke-linejoin="miter"/>
<path d="M2.2 8.6 L6.2 12.6 L14.6 3.4" fill="none" stroke="#7ccf72" stroke-width="1.8"/></svg>
<svg width="16" height="16" style="left:1168px;top:636px" viewBox="0 0 16 16"><rect x="1.5" y="0.8" width="13.2" height="14.4" rx="1" fill="#fff" stroke="#c4c4c4" stroke-width="1.1"/>
<rect x="3" y="2.5" width="7" height="2.5" fill="#eee"/>
<g transform="translate(0.3,-1.8)"><path d="M13.3 1.3 L16.6 4.6 L7.4 13.6 L3.3 14.8 L4.3 10.5Z" fill="#f6dc48" stroke="#d07a2a" stroke-width="1"/>
<path d="M13.3 1.3 L16.6 4.6 L15.2 6 L11.9 2.7Z" fill="#f6c8a8" stroke="#d07a2a" stroke-width="0.8"/>
<path d="M4.3 10.5 L7.4 13.6 L3.3 14.8Z" fill="#e8b888"/>
<path d="M3.9 12.6 L5.4 14.1 L3.3 14.8Z" fill="#4a2808"/></g></svg>
<svg width="16" height="16" style="left:1187px;top:636px" viewBox="0 0 16 16"><rect x="0.6" y="0.6" width="12" height="10" rx="1" fill="#fff" stroke="#8aaee6" stroke-width="1"/>
<rect x="0.6" y="0.6" width="12" height="2.2" fill="#a6c2ee"/>
<rect x="3.6" y="4.6" width="12" height="10.5" rx="1" fill="#f4f7fc" stroke="#5a86d0" stroke-width="1.2"/>
<rect x="3.6" y="4.6" width="12" height="2.4" fill="#7aa2e4"/></svg>
<svg width="16" height="16" style="left:1208px;top:636px" viewBox="0 0 16 16"><defs><linearGradient id="gt" x1="0" y1="0" x2="1" y2="0"><stop offset="0" stop-color="#cfcfcf"/><stop offset="0.45" stop-color="#fafafa"/><stop offset="1" stop-color="#b4b4b4"/></linearGradient></defs>
<path d="M3.5 2 Q3.5 1 8 1 Q12.5 1 12.5 2 V14.2 Q12.5 15.2 8 15.2 Q3.5 15.2 3.5 14.2Z" fill="url(#gt)" stroke="#7a7a7a" stroke-width="0.9"/>
<ellipse cx="8" cy="3.3" rx="4.3" ry="1.4" fill="#f4f4f4" stroke="#777" stroke-width="0.8"/>
<path d="M6.3 6.5 V13 M9.7 6.5 V13" stroke="#b0b0b0" stroke-width="0.9"/></svg>
</body></html>
